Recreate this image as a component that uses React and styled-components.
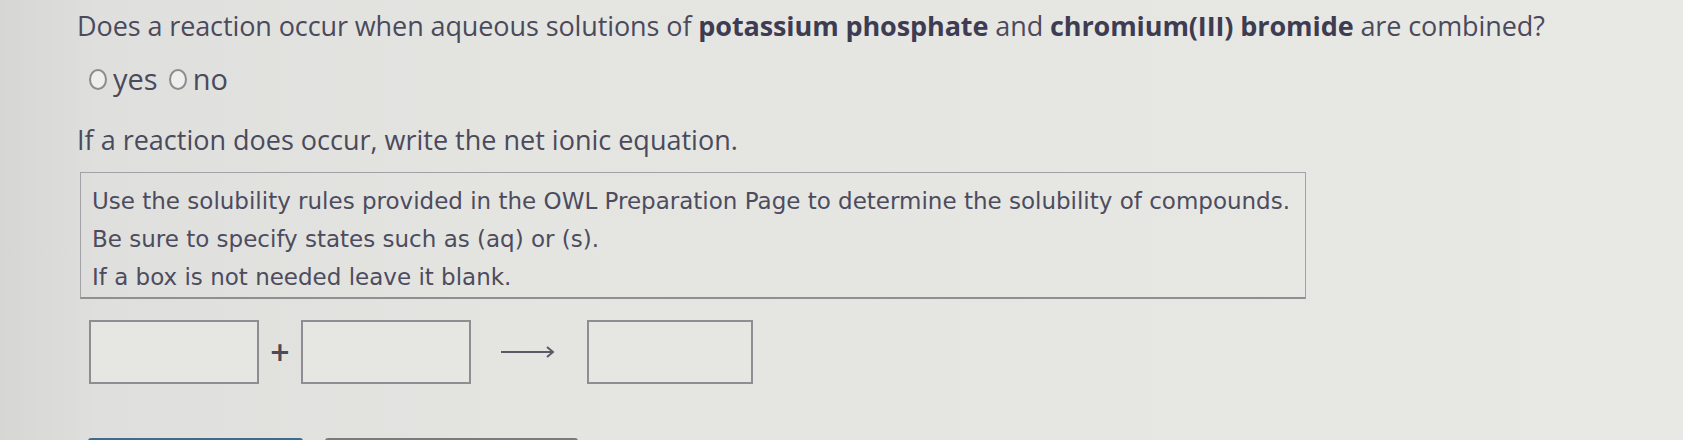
import React from 'react';
import styled, { createGlobalStyle } from 'styled-components';

const Global = createGlobalStyle`
  html, body {
    margin: 0;
    padding: 0;
    overflow: hidden;
  }
  body {
    background: linear-gradient(90deg, #d6d7d5 0%, #dfe0dd 6%, #e4e5e1 30%, #e8e8e4 100%);
  }
`;

const Page = styled.div`
  width: 1683px;
  height: 440px;
  box-sizing: border-box;
  padding: 8px 0 0 77px;
  color: #4b4a5c;
  font-family: "Open Sans", "Noto Sans", sans-serif;
`;

const Question = styled.div`
  font-size: 27px;
  line-height: 36px;
  letter-spacing: -0.1px;
  b {
    font-weight: 700;
    color: #3d3c52;
  }
`;

const Choices = styled.div`
  display: flex;
  align-items: center;
  margin-top: 20px;
  padding-left: 12px;
  font-size: 29px;
  line-height: 30px;
`;

const Choice = styled.label`
  display: flex;
  align-items: center;
  margin-right: 11px;
`;

const Radio = styled.span`
  display: inline-block;
  width: 14px;
  height: 17px;
  border: 2px solid #8c8c90;
  border-radius: 50%;
  background: #eeeeec;
  margin-right: 6px;
`;

const Prompt = styled.div`
  margin-top: 28px;
  font-size: 27px;
  line-height: 36px;
`;

const Note = styled.div`
  margin-top: 14px;
  margin-left: 3px;
  width: 1226px;
  box-sizing: border-box;
  border: 1.5px solid #a2a2a6;
  border-bottom: 2px solid #8f8f94;
  padding: 9px 4px 1px 11px;
  font-family: "DejaVu Sans", Verdana, sans-serif;
  font-size: 23px;
  line-height: 38px;
  white-space: nowrap;
  color: #4d4c5e;
`;

const Equation = styled.div`
  display: flex;
  align-items: center;
  margin-top: 21px;
  margin-left: 12px;
  font-family: "DejaVu Sans", Verdana, sans-serif;
`;

const Slot = styled.div`
  width: ${(p) => p.$w}px;
  height: 64px;
  box-sizing: border-box;
  border: 2px solid #8e8e92;
  background: #e6e6e3;
`;

const Plus = styled.span`
  width: 42px;
  text-align: center;
  font-size: 26px;
  font-weight: 700;
  color: #4a4a58;
`;

const Arrow = styled.span`
  display: flex;
  align-items: center;
  margin: 0 32px 0 30px;
`;

const Buttons = styled.div`
  display: flex;
  gap: 22px;
  margin-top: 54px;
  margin-left: 11px;
`;

const Button = styled.div`
  width: ${(p) => p.$w}px;
  height: 40px;
  border-radius: 3px;
  background: ${(p) => p.$bg};
`;

export default function App() {
  return (
    <>
      <Global />
      <Page>
        <Question>
          Does a reaction occur when aqueous solutions of <b>potassium phosphate</b> and{' '}
          <b>chromium(III) bromide</b> are combined?
        </Question>
        <Choices>
          <Choice>
            <Radio />
            yes
          </Choice>
          <Choice>
            <Radio />
            no
          </Choice>
        </Choices>
        <Prompt>If a reaction does occur, write the net ionic equation.</Prompt>
        <Note>
          Use the solubility rules provided in the OWL Preparation Page to determine the solubility of compounds.
          <br />
          Be sure to specify states such as (aq) or (s).
          <br />
          If a box is not needed leave it blank.
        </Note>
        <Equation>
          <Slot $w={170} />
          <Plus>+</Plus>
          <Slot $w={170} />
          <Arrow>
            <svg width="54" height="14" viewBox="0 0 54 14">
              <path d="M0 7 H52 M46 2 L52 7 L46 12" fill="none" stroke="#5a5a66" strokeWidth="2" />
            </svg>
          </Arrow>
          <Slot $w={166} />
        </Equation>
        <Buttons>
          <Button $w={215} $bg="#3f6b8c" />
          <Button $w={253} $bg="#7a7b7d" />
        </Buttons>
      </Page>
    </>
  );
}
